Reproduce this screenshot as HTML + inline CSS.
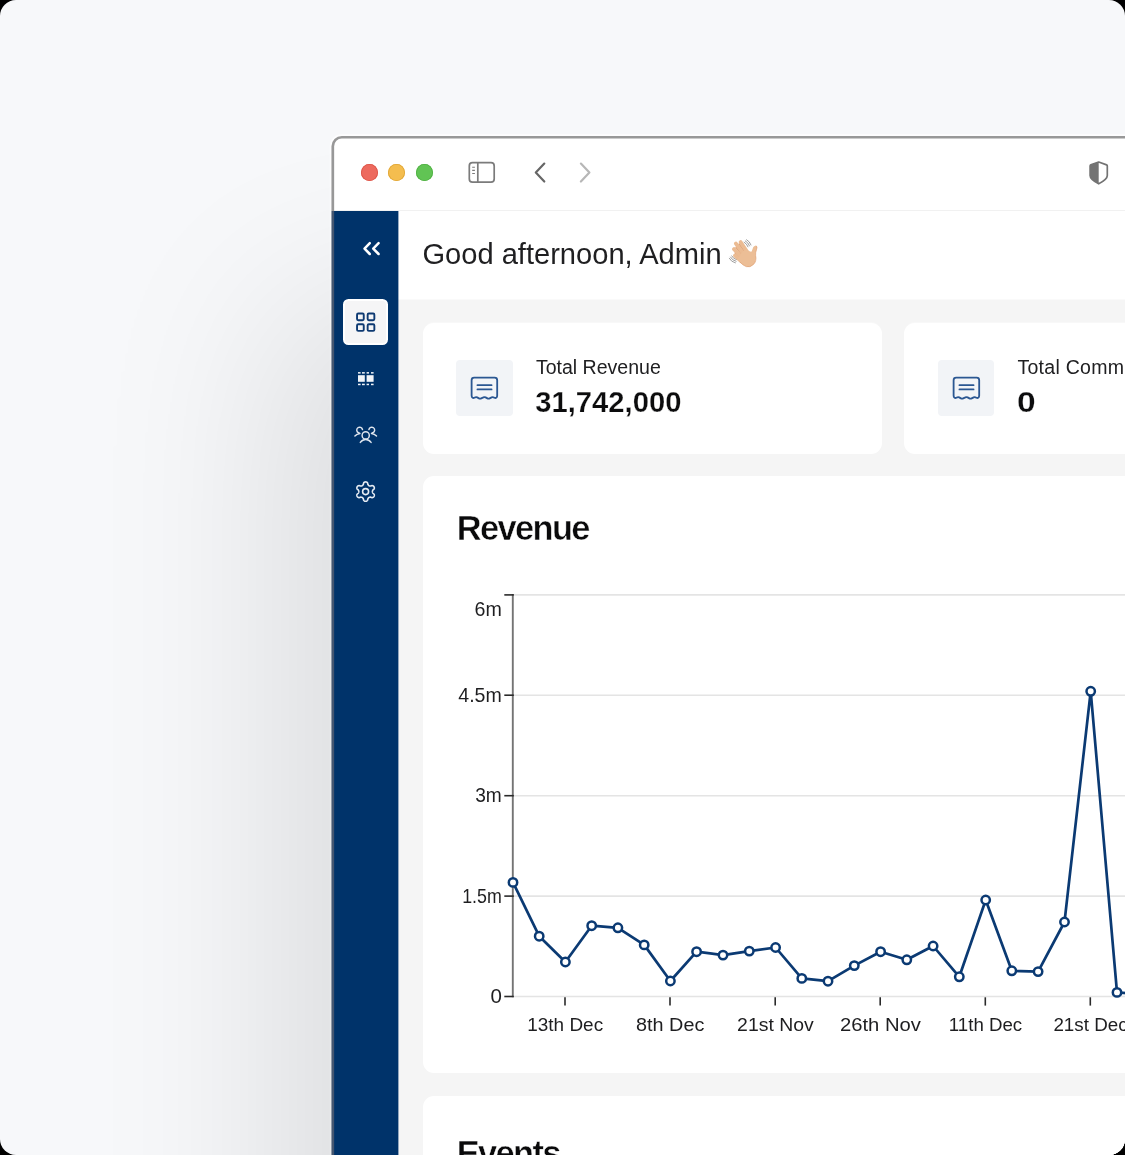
<!DOCTYPE html>
<html lang="en">
<head>
<meta charset="utf-8">
<title>Dashboard</title>
<style>
  * { box-sizing: border-box; }
  html, body { margin: 0; padding: 0; background: #000; }
  body { width: 1125px; height: 1155px; overflow: hidden; font-family: "Liberation Sans", sans-serif; color: #1d1d1f; }
  .canvas { position: absolute; left: 0; top: 0; width: 1125px; height: 1155px; border-radius: 16px; overflow: hidden;
            background: #f7f8fa; will-change: transform; }
  /* browser window */
  .window { position: absolute; left: 334px; top: 138px; width: 900px; height: 1100px; background: #fff;
            border-top-left-radius: 8px;
            box-shadow: -25px 200px 185px 32px rgba(10,10,12,.115); }
  .frame { position: absolute; left: 0; top: 0; }
  .titlebar { position: absolute; left: 0; top: 0; width: 100%; height: 73px; background: #fff; border-top-left-radius: 8px;
              border-bottom: 1px solid #f1f1f1; }
  .dot { position: absolute; top: 25.7px; width: 17px; height: 17px; border-radius: 50%; }
  .dot.r { left: 26.6px; background: #ed6a5e; box-shadow: inset 0 0 0 .8px #dc5548; }
  .dot.y { left: 54.2px; background: #f4bd4f; box-shadow: inset 0 0 0 .8px #e0a636; }
  .dot.g { left: 81.9px; background: #61c454; box-shadow: inset 0 0 0 .8px #50b043; }
  .tb-svg { position: absolute; left: 0; top: 0; }
  /* app */
  .sidebar { position: absolute; left: 0; top: 73px; width: 64px; height: 1030px; background: #00336a; box-shadow: 1px 0 0 rgba(0,51,106,.4); }
  .nav-active { position: absolute; left: 9px; top: 161px; width: 45.4px; height: 46px; border-radius: 5.5px; background: #f5f5f6;
                border: 2px solid #fff; }
  .side-svg { position: absolute; left: 0; top: 0; }
  .header { position: absolute; left: 64px; top: 73px; right: 0; height: 88px; background: #fff; }
  .greeting { position: absolute; left: 88.4px; top: 97.7px; font-size: 29.1px; line-height: 36px; white-space: nowrap; color: #1f1f21; }
  .content { position: absolute; left: 64px; top: 161px; right: 0; bottom: 0; background: #f5f5f5; border-top: 1px solid #fafafa; }
  .card { position: absolute; background: #fff; border-radius: 11px; }
  .stat1 { left: 88.5px; top: 185px; width: 459px; height: 131px; box-shadow: 0 -1px 0 rgba(255,255,255,.3); }
  .stat2 { left: 570px; top: 185px; width: 459px; height: 131px; box-shadow: 0 -1px 0 rgba(255,255,255,.3); }
  .iconbox { position: absolute; left: 33.6px; top: 36.6px; width: 56.8px; height: 56.6px; border-radius: 4px; background: #f2f4f7; }
  .stat-label { position: absolute; left: 113.4px; top: 31.8px; font-size: 19.55px; line-height: 24px; white-space: nowrap; color: #202022; }
  .stat-value { position: absolute; left: 112.8px; top: 61px; font-size: 29.2px; line-height: 36px; font-weight: 700; -webkit-text-stroke: .25px #fff; letter-spacing: 0; white-space: nowrap; color: #0c0c0d; }
  .rev { left: 88.5px; top: 338px; width: 1100px; height: 597px; }
  .evt { left: 88.5px; top: 958.2px; width: 1100px; height: 300px; }
  .card-title { position: absolute; left: 34.2px; font-size: 34.4px; line-height: 40px; font-weight: 700; letter-spacing: -1.6px; -webkit-text-stroke: .45px #fff; color: #0a0a0b; white-space: nowrap; }
  .chart { position: absolute; left: -0.5px; top: 0; }
  .chart text { font-family: "Liberation Sans", sans-serif; font-size: 19.2px; fill: #1e1e20; }
  .chart .ylab text { font-size: 19.8px; }
</style>
</head>
<body>
<div class="canvas">
  <svg class="frame" width="1125" height="1155" viewBox="0 0 1125 1155" fill="none">
    <rect x="332.05" y="136.55" width="900" height="1200" rx="9.6" stroke="#fff" stroke-opacity=".75" stroke-width="4.6"/>
  </svg>
  <div class="window">
    <div class="titlebar">
      <span class="dot r"></span><span class="dot y"></span><span class="dot g"></span>
      <svg class="tb-svg" width="800" height="73" viewBox="0 0 800 73" fill="none">
        <rect x="135.3" y="24.7" width="24.9" height="19.4" rx="3.2" stroke="#7b7b7b" stroke-width="1.7"/>
        <path d="M143.8 24.7V44.1" stroke="#7b7b7b" stroke-width="1.7"/>
        <path d="M138.2 29.3h2.7M138.2 32.4h2.7M138.2 35.5h2.7" stroke="#7b7b7b" stroke-width="1.1"/>
        <path d="M210.3 25.6L201.8 34.6L210.3 43.5" stroke="#666" stroke-width="2.2" stroke-linecap="round" stroke-linejoin="round"/>
        <path d="M246.9 25.6L255.4 34.6L246.9 43.5" stroke="#b7b7b7" stroke-width="2.2" stroke-linecap="round" stroke-linejoin="round"/>
        <path d="M764.7 24L772.6 26.9Q773.3 27.2 773.3 28V37.6Q773.3 41.6 764.7 45.8Q756.1 41.6 756.1 37.6V28Q756.1 27.2 756.8 26.9Z" stroke="#737373" stroke-width="1.7" stroke-linejoin="round"/>
        <path d="M764.7 24V45.8Q756.1 41.6 756.1 37.6V28Q756.1 27.2 756.8 26.9Z" fill="#737373"/>
      </svg>
    </div>
    <div class="header"></div>
    <div class="content"></div>
    <div class="sidebar"></div>
        <div class="nav-active"></div>
    <svg class="side-svg" width="66" height="400" viewBox="0 0 66 400" fill="none">
      <path d="M35.8 105.2L30.5 110.6L35.8 116M44.6 105.2L39.2 110.6L44.6 116" stroke="#fff" stroke-width="2.5" stroke-linecap="round" stroke-linejoin="round"/>
      <g stroke="#0e3a72" stroke-width="1.9">
        <rect x="23.05" y="175.5" width="6.7" height="6.7" rx="1.2"/>
        <rect x="33.65" y="175.5" width="6.7" height="6.7" rx="1.2"/>
        <rect x="23.05" y="186.2" width="6.7" height="6.7" rx="1.2"/>
        <rect x="33.65" y="186.2" width="6.7" height="6.7" rx="1.2"/>
      </g>
      <g fill="#f1f4f8">
        <rect x="24" y="237.2" width="6.8" height="6.6"/>
        <rect x="32.6" y="237.2" width="7" height="6.6"/>
        <rect x="24" y="234.1" width="2.6" height="1.5"/><rect x="28" y="234.1" width="2.8" height="1.5"/>
        <rect x="32.6" y="234.1" width="2.4" height="1.5"/><rect x="37" y="234.1" width="2.6" height="1.5"/>
        <rect x="24" y="245.7" width="2.6" height="1.5"/><rect x="28" y="245.7" width="2.8" height="1.5"/>
        <rect x="32.6" y="245.7" width="2.4" height="1.5"/><rect x="37" y="245.7" width="2.6" height="1.5"/>
      </g>
      <g stroke="#dfe6ef" stroke-width="1.45" stroke-linecap="round" stroke-linejoin="round">
        <circle cx="31.7" cy="297.4" r="3.6"/>
        <path d="M26.3 304.4Q28.5 301.4 31.7 301.4Q34.9 301.4 37.1 304.4"/>
        <path d="M28.5 291.6A2.9 2.9 0 1 0 24.4 294.7"/>
        <path d="M20.9 297.9Q22.8 296 25.9 295.5L24.4 294.7"/>
        <path d="M34.9 291.6A2.9 2.9 0 1 1 39 294.7"/>
        <path d="M42.5 297.9Q40.6 296 37.5 295.5L39 294.7"/>
      </g>
      <g stroke="#e6ecf3" stroke-width="1.6" stroke-linejoin="round">
        <path d="M38.40 353.60 L38.42 353.90 L38.48 354.20 L38.59 354.52 L38.75 354.86 L38.98 355.24 L39.57 355.74 L40.13 356.29 L40.28 356.76 L40.33 357.22 L40.29 357.65 L40.18 358.07 L40.00 358.45 L39.76 358.80 L39.46 359.10 L39.10 359.35 L38.68 359.54 L38.19 359.64 L37.43 359.43 L36.71 359.17 L36.27 359.16 L35.89 359.19 L35.56 359.26 L35.27 359.36 L35.00 359.49 L34.75 359.66 L34.52 359.86 L34.30 360.11 L34.08 360.42 L33.87 360.81 L33.74 361.57 L33.53 362.33 L33.20 362.70 L32.83 362.97 L32.44 363.15 L32.02 363.26 L31.60 363.30 L31.18 363.26 L30.76 363.15 L30.37 362.97 L30.00 362.70 L29.67 362.33 L29.46 361.57 L29.33 360.81 L29.12 360.42 L28.90 360.11 L28.68 359.86 L28.45 359.66 L28.20 359.49 L27.93 359.36 L27.64 359.26 L27.31 359.19 L26.93 359.16 L26.49 359.17 L25.77 359.43 L25.01 359.64 L24.52 359.54 L24.10 359.35 L23.74 359.10 L23.44 358.80 L23.20 358.45 L23.02 358.07 L22.91 357.65 L22.87 357.22 L22.92 356.76 L23.07 356.29 L23.63 355.74 L24.22 355.24 L24.45 354.86 L24.61 354.52 L24.72 354.20 L24.78 353.90 L24.80 353.60 L24.78 353.30 L24.72 353.00 L24.61 352.68 L24.45 352.34 L24.22 351.96 L23.63 351.46 L23.07 350.91 L22.92 350.44 L22.87 349.98 L22.91 349.55 L23.02 349.13 L23.20 348.75 L23.44 348.40 L23.74 348.10 L24.10 347.85 L24.52 347.66 L25.01 347.56 L25.77 347.77 L26.49 348.03 L26.93 348.04 L27.31 348.01 L27.64 347.94 L27.93 347.84 L28.20 347.71 L28.45 347.54 L28.68 347.34 L28.90 347.09 L29.12 346.78 L29.33 346.39 L29.46 345.63 L29.67 344.87 L30.00 344.50 L30.37 344.23 L30.76 344.05 L31.18 343.94 L31.60 343.90 L32.02 343.94 L32.44 344.05 L32.83 344.23 L33.20 344.50 L33.53 344.87 L33.74 345.63 L33.87 346.39 L34.08 346.78 L34.30 347.09 L34.52 347.34 L34.75 347.54 L35.00 347.71 L35.27 347.84 L35.56 347.94 L35.89 348.01 L36.27 348.04 L36.71 348.03 L37.43 347.77 L38.19 347.56 L38.68 347.66 L39.10 347.85 L39.46 348.10 L39.76 348.40 L40.00 348.75 L40.18 349.13 L40.29 349.55 L40.33 349.98 L40.28 350.44 L40.13 350.91 L39.57 351.46 L38.98 351.96 L38.75 352.34 L38.59 352.68 L38.48 353.00 L38.42 353.30 Z"/>
        <circle cx="31.6" cy="353.6" r="3"/>
      </g>
    </svg>
    <div class="greeting">Good afternoon, Admin</div>
    <svg class="hand" width="50" height="50" viewBox="0 0 50 50" fill="none" style="position:absolute;left:386px;top:92px">
      <g stroke="#868686" stroke-width="0.8" stroke-linecap="round">
        <path d="M26.6 9.7Q29.9 11.5 31 15M25.3 10.9Q28.4 12.6 29.5 15.9M24.1 12.2Q27 13.7 28 16.8"/>
        <path d="M9.3 28.3Q11.2 32 15.4 32.9M10.5 27.1Q12.2 30.5 16.1 31.3M11.7 25.9Q13.2 28.9 16.7 29.7"/>
      </g>
      <path d="M19.3 14.2L25.5 23.3M16.3 17.5L23 26M15.5 23L21.5 29.2" stroke="#dda27a" stroke-width="1.8" stroke-linecap="round"/>
      <g stroke="#ebbb92" stroke-width="3.8" stroke-linecap="round">
        <path d="M20.6 12.1L27.6 22.5"/>
        <path d="M15.9 13.6L24 24.5"/>
        <path d="M14 19.1L22 27.5"/>
        <path d="M15 25.5L21 31"/>
      </g>
      <path d="M33.2 17.2Q34.5 15 36.4 15.9Q37.6 16.8 36.6 19.2Q35.3 22.5 35.6 25.5Q36.8 31 33.5 34.4Q30 37.8 26.2 36.6Q23.4 35.6 20.2 32.4L17.5 29.6L23 21L26.5 19.5Q29.5 22 31.6 21.6Q32.4 19.5 33.2 17.2Z" fill="#ecbe96"/>
      <path d="M36.4 15.9Q37.6 16.8 36.6 19.2Q35.3 22.5 35.6 25.5Q36.8 31 33.5 34.4Q30 37.8 26.2 36.6Q23.4 35.6 20.2 32.4" stroke="#dfa174" stroke-width="0.7" fill="none" stroke-linecap="round"/>
    </svg>
    <div class="card stat1">
      <div class="iconbox"><svg width="57" height="57" viewBox="0 0 56.6 56.6" fill="none" stroke="#2b5792" stroke-width="1.8" stroke-linecap="round" stroke-linejoin="round">
        <path d="M15.5 35.2V20Q15.5 17.5 18 17.5H38.4Q40.9 17.5 40.9 20V35.2C40.9 37.2 39.6 38.3 38.2 37.5C37.2 36.9 36.4 36.6 35.4 37.1L33.4 38.1C32.7 38.5 31.9 38.5 31.2 38.1L29.4 37.1C28.7 36.7 27.9 36.7 27.2 37.1L25 38.1C24.3 38.5 23.5 38.5 22.8 38.1L21 37.1C20 36.6 19.2 36.9 18.2 37.5C16.8 38.3 15.5 37.2 15.5 35.2Z"/>
        <path d="M21.3 25H35.3M21.3 29.2H35.3"/>
      </svg></div>
      <div class="stat-label">Total Revenue</div>
      <div class="stat-value">31,742,000</div>
    </div>
    <div class="card stat2">
      <div class="iconbox"><svg width="57" height="57" viewBox="0 0 56.6 56.6" fill="none" stroke="#2b5792" stroke-width="1.8" stroke-linecap="round" stroke-linejoin="round">
        <path d="M15.5 35.2V20Q15.5 17.5 18 17.5H38.4Q40.9 17.5 40.9 20V35.2C40.9 37.2 39.6 38.3 38.2 37.5C37.2 36.9 36.4 36.6 35.4 37.1L33.4 38.1C32.7 38.5 31.9 38.5 31.2 38.1L29.4 37.1C28.7 36.7 27.9 36.7 27.2 37.1L25 38.1C24.3 38.5 23.5 38.5 22.8 38.1L21 37.1C20 36.6 19.2 36.9 18.2 37.5C16.8 38.3 15.5 37.2 15.5 35.2Z"/>
        <path d="M21.3 25H35.3M21.3 29.2H35.3"/>
      </svg></div>
      <div class="stat-label" style="letter-spacing:.27px">Total Commission</div>
      <div class="stat-value" style="transform:scaleX(1.15);transform-origin:0 50%">0</div>
    </div>
    <div class="card rev">
      <div class="card-title" style="top:32px">Revenue</div>
      <svg class="chart" width="720" height="597" viewBox="0 0 720 597" fill="none">
      <path d="M91.8 118.9H720" stroke="#e4e4e4" stroke-width="1.6"/>
      <path d="M91.8 219.2H720" stroke="#e4e4e4" stroke-width="1.6"/>
      <path d="M91.8 319.7H720" stroke="#e4e4e4" stroke-width="1.6"/>
      <path d="M91.8 420.1H720" stroke="#e4e4e4" stroke-width="1.6"/>
      <path d="M91.8 520.5H720" stroke="#e4e4e4" stroke-width="1.6"/>
      <path d="M90.8 118.1V521.3" stroke="#747474" stroke-width="1.9"/>
      <path d="M82.3 118.9H91.8" stroke="#2a2a2a" stroke-width="1.6"/>
      <path d="M82.3 219.2H91.8" stroke="#2a2a2a" stroke-width="1.6"/>
      <path d="M82.3 319.7H91.8" stroke="#2a2a2a" stroke-width="1.6"/>
      <path d="M82.3 420.1H91.8" stroke="#2a2a2a" stroke-width="1.6"/>
      <path d="M82.3 520.5H91.8" stroke="#2a2a2a" stroke-width="1.6"/>
      <path d="M143.0 521.3V529.6" stroke="#2a2a2a" stroke-width="1.6"/>
      <path d="M248.0 521.3V529.6" stroke="#2a2a2a" stroke-width="1.6"/>
      <path d="M353.2 521.3V529.6" stroke="#2a2a2a" stroke-width="1.6"/>
      <path d="M458.2 521.3V529.6" stroke="#2a2a2a" stroke-width="1.6"/>
      <path d="M563.3 521.3V529.6" stroke="#2a2a2a" stroke-width="1.6"/>
      <path d="M668.3 521.3V529.6" stroke="#2a2a2a" stroke-width="1.6"/>
      <g class="ylab" text-anchor="end">
      <text x="79.8" y="140.1" textLength="27.3" lengthAdjust="spacingAndGlyphs">6m</text>
      <text x="79.8" y="225.8" textLength="43.5" lengthAdjust="spacingAndGlyphs">4.5m</text>
      <text x="79.8" y="326.3" textLength="26.6" lengthAdjust="spacingAndGlyphs">3m</text>
      <text x="79.8" y="426.7" textLength="39.6" lengthAdjust="spacingAndGlyphs">1.5m</text>
      <text x="79.8" y="527.1" textLength="11.4" lengthAdjust="spacingAndGlyphs">0</text>
      </g>
      <g class="xlab" text-anchor="middle">
      <text x="143.2" y="554.8" textLength="75.8" lengthAdjust="spacingAndGlyphs">13th Dec</text>
      <text x="248.2" y="554.8" textLength="68.3" lengthAdjust="spacingAndGlyphs">8th Dec</text>
      <text x="353.4" y="554.8" textLength="76.6" lengthAdjust="spacingAndGlyphs">21st Nov</text>
      <text x="458.4" y="554.8" textLength="81.0" lengthAdjust="spacingAndGlyphs">26th Nov</text>
      <text x="563.5" y="554.8" textLength="73.4" lengthAdjust="spacingAndGlyphs">11th Dec</text>
      <text x="668.5" y="554.8" textLength="74.2" lengthAdjust="spacingAndGlyphs">21st Dec</text>
      </g>
      <path d="M91.0 406.4L117.2 460.2L143.4 486.0L169.7 449.7L195.9 451.8L222.2 468.9L248.4 505.0L274.6 475.7L301.0 479.1L327.3 475.1L353.6 471.5L379.8 502.4L406.0 505.2L432.3 489.6L458.6 475.7L484.8 483.8L511.1 470.0L537.3 500.8L563.7 424.0L589.8 494.8L616.1 495.6L642.5 446.0L668.7 215.3L695.0 516.4L721.3 518.5" stroke="#0b3a73" stroke-width="2.7" stroke-linejoin="round" stroke-linecap="round"/>
      <circle cx="91.0" cy="406.4" r="4.2" fill="#fff" stroke="#0b3a73" stroke-width="2.5"/>
      <circle cx="117.2" cy="460.2" r="4.2" fill="#fff" stroke="#0b3a73" stroke-width="2.5"/>
      <circle cx="143.4" cy="486.0" r="4.2" fill="#fff" stroke="#0b3a73" stroke-width="2.5"/>
      <circle cx="169.7" cy="449.7" r="4.2" fill="#fff" stroke="#0b3a73" stroke-width="2.5"/>
      <circle cx="195.9" cy="451.8" r="4.2" fill="#fff" stroke="#0b3a73" stroke-width="2.5"/>
      <circle cx="222.2" cy="468.9" r="4.2" fill="#fff" stroke="#0b3a73" stroke-width="2.5"/>
      <circle cx="248.4" cy="505.0" r="4.2" fill="#fff" stroke="#0b3a73" stroke-width="2.5"/>
      <circle cx="274.6" cy="475.7" r="4.2" fill="#fff" stroke="#0b3a73" stroke-width="2.5"/>
      <circle cx="301.0" cy="479.1" r="4.2" fill="#fff" stroke="#0b3a73" stroke-width="2.5"/>
      <circle cx="327.3" cy="475.1" r="4.2" fill="#fff" stroke="#0b3a73" stroke-width="2.5"/>
      <circle cx="353.6" cy="471.5" r="4.2" fill="#fff" stroke="#0b3a73" stroke-width="2.5"/>
      <circle cx="379.8" cy="502.4" r="4.2" fill="#fff" stroke="#0b3a73" stroke-width="2.5"/>
      <circle cx="406.0" cy="505.2" r="4.2" fill="#fff" stroke="#0b3a73" stroke-width="2.5"/>
      <circle cx="432.3" cy="489.6" r="4.2" fill="#fff" stroke="#0b3a73" stroke-width="2.5"/>
      <circle cx="458.6" cy="475.7" r="4.2" fill="#fff" stroke="#0b3a73" stroke-width="2.5"/>
      <circle cx="484.8" cy="483.8" r="4.2" fill="#fff" stroke="#0b3a73" stroke-width="2.5"/>
      <circle cx="511.1" cy="470.0" r="4.2" fill="#fff" stroke="#0b3a73" stroke-width="2.5"/>
      <circle cx="537.3" cy="500.8" r="4.2" fill="#fff" stroke="#0b3a73" stroke-width="2.5"/>
      <circle cx="563.7" cy="424.0" r="4.2" fill="#fff" stroke="#0b3a73" stroke-width="2.5"/>
      <circle cx="589.8" cy="494.8" r="4.2" fill="#fff" stroke="#0b3a73" stroke-width="2.5"/>
      <circle cx="616.1" cy="495.6" r="4.2" fill="#fff" stroke="#0b3a73" stroke-width="2.5"/>
      <circle cx="642.5" cy="446.0" r="4.2" fill="#fff" stroke="#0b3a73" stroke-width="2.5"/>
      <circle cx="668.7" cy="215.3" r="4.2" fill="#fff" stroke="#0b3a73" stroke-width="2.5"/>
      <circle cx="695.0" cy="516.4" r="4.2" fill="#fff" stroke="#0b3a73" stroke-width="2.5"/>
      </svg>
    </div>
    <div class="card evt">
      <div class="card-title" style="top:36.5px">Events</div>
    </div>
  </div>
  <svg class="frame" width="1125" height="1155" viewBox="0 0 1125 1155" fill="none">
    <path d="M332.8 211V146.25A9 9 0 0 1 341.8 137.25H1130" stroke="#989898" stroke-width="2.7"/>
    <path d="M332.8 211V1160" stroke="#445670" stroke-width="2.7"/>
  </svg>
</div>
</body>
</html>
